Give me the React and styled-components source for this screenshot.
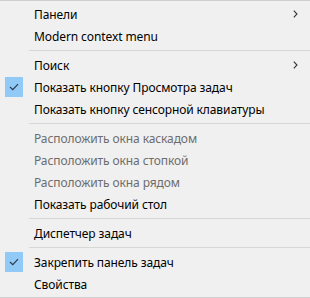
import React from "react";
import styled, { createGlobalStyle } from "styled-components";

const Global = createGlobalStyle`
  html, body { margin: 0; padding: 0; background: #f0f0f0; overflow: hidden; }
  body { font-family: "Segoe UI", "Noto Sans", "Open Sans", sans-serif; }
`;

const Menu = styled.div`
  box-sizing: border-box;
  width: 314px;
  margin-left: -2px;
  height: 298px;
  background: #f0f0f0;
  border: 1px solid #cfcfcf;
  padding: 2px 0;
  display: flex;
  flex-direction: column;
`;

const Item = styled.div`
  height: 22px;
  display: flex;
  align-items: center;
  position: relative;
  padding-left: 35px;
  font-size: 12px;
  letter-spacing: -0.1px;
  color: ${(p) => (p.$disabled ? "#6d6d6d" : "#000")};
  white-space: nowrap;
`;

const CheckBox = styled.div`
  position: absolute;
  left: 6px;
  top: 1px;
  width: 18px;
  height: 20px;
  background: #91c9f7;
  display: flex;
  align-items: center;
  justify-content: center;
`;

const Arrow = styled.svg`
  position: absolute;
  right: 13px;
  top: 7px;
`;

const Separator = styled.div`
  height: 7px;
  display: flex;
  align-items: center;
  padding-left: 30px;
  &::after {
    content: "";
    flex: 1;
    height: 1px;
    background: #d7d7d7;
  }
`;

const Check = () => (
  <CheckBox>
    <svg width="10" height="8" viewBox="0 0 10 8">
      <path d="M1 4 L3.8 6.6 L9 1.2" fill="none" stroke="#2a3a4c" strokeWidth="1.2" />
    </svg>
  </CheckBox>
);

const Chevron = () => (
  <Arrow width="5" height="8" viewBox="0 0 5 8">
    <path d="M0.8 0.6 L4 4 L0.8 7.4" fill="none" stroke="#333" strokeWidth="1.1" />
  </Arrow>
);

const data = [
  { t: "Панели", sub: true },
  { t: "Modern context menu" },
  { sep: true },
  { t: "Поиск", sub: true },
  { t: "Показать кнопку Просмотра задач", check: true },
  { t: "Показать кнопку сенсорной клавиатуры" },
  { sep: true },
  { t: "Расположить окна каскадом", dis: true },
  { t: "Расположить окна стопкой", dis: true },
  { t: "Расположить окна рядом", dis: true },
  { t: "Показать рабочий стол" },
  { sep: true },
  { t: "Диспетчер задач" },
  { sep: true },
  { t: "Закрепить панель задач", check: true },
  { t: "Свойства" },
];

export default function App() {
  return (
    <>
      <Global />
      <Menu>
        {data.map((d, i) =>
          d.sep ? (
            <Separator key={i} />
          ) : (
            <Item key={i} $disabled={d.dis}>
              {d.check && <Check />}
              {d.t}
              {d.sub && <Chevron />}
            </Item>
          )
        )}
      </Menu>
    </>
  );
}
